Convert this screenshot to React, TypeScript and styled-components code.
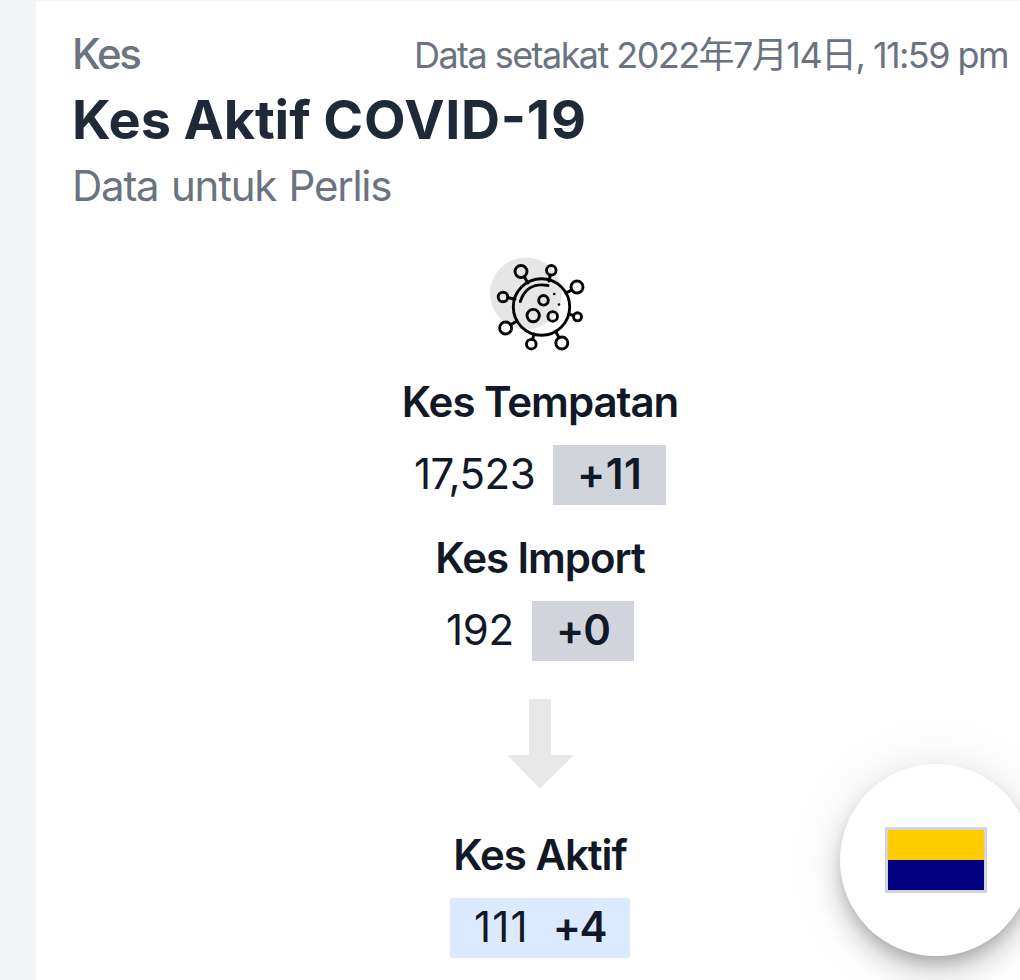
import React from "react";
import styled, { createGlobalStyle } from "styled-components";

const GlobalStyle = createGlobalStyle`
  *, *::before, *::after { box-sizing: border-box; }
  body {
    margin: 0;
    background: #f3f4f6;
    overflow: hidden;
    font-family: Inter, "Noto Sans CJK JP", sans-serif;
    font-feature-settings: "calt" 0;
    color: #111827;
  }
  p, h1, h2 { margin: 0; font-weight: 400; }
`;

const Page = styled.main`
  width: 100vw;
  height: 100vh;
  overflow: hidden;
  background: #f3f4f6;
`;

const Card = styled.section`
  width: 1008px;
  height: 1100px;
  margin: 1px 0 0 36px;
  padding: 23px 36px 0;
  background: #fff;
  white-space: nowrap;
`;

const TopRow = styled.div`
  display: flex;
  justify-content: space-between;
  align-items: center;
  height: 60px;
  color: #6b7280;
`;

const Category = styled.p`
  font-size: 42px;
  line-height: 60px;
  font-weight: 500;
  letter-spacing: -0.055em;
`;

const Timestamp = styled.p`
  padding-top: 2px;
  font-size: 36px;
  line-height: 60px;
  letter-spacing: -1.56px;
`;

const Title = styled.h1`
  font-size: 54px;
  line-height: 72px;
  font-weight: 700;
  letter-spacing: -0.1px;
  font-feature-settings: "calt" 1;
  color: #1f2937;
`;

const Tracked = styled.span<{ $tracking: number }>`
  letter-spacing: ${(p) => p.$tracking}px;
`;

const Subtitle = styled.p`
  font-size: 42px;
  line-height: 60px;
  letter-spacing: -1.25px;
  word-spacing: 2px;
  color: #6b7280;
`;

const Flow = styled.div`
  display: flex;
  flex-direction: column;
  align-items: center;
  padding-top: 41px;
  font-size: 42px;
  line-height: 60px;
`;

const VirusIcon = styled.svg`
  display: block;
  width: 96px;
  height: 96px;
  margin-bottom: 19px;
`;

const ArrowIcon = styled.svg`
  display: block;
  width: 96px;
  height: 96px;
  margin: 13px 0 32px;
`;

const Stat = styled.div`
  display: flex;
  flex-direction: column;
  align-items: center;
  gap: 13px;
  margin-bottom: 23px;
`;

const StatLabel = styled.h2`
  font-size: 42px;
  line-height: 60px;
  font-weight: 600;
  letter-spacing: -0.025em;
`;

const Figures = styled.div<{ $highlight?: boolean }>`
  display: flex;
  gap: ${(p) => (p.$highlight ? 0 : 18)}px;
  height: 60px;
  line-height: 58px;
  padding-left: ${(p) => (p.$highlight ? 24 : 0)}px;
  border-radius: ${(p) => (p.$highlight ? 3 : 0)}px;
  background: ${(p) => (p.$highlight ? "#dbeafe" : "transparent")};
`;

const Change = styled.strong<{ $plain?: boolean; $tracking: number }>`
  padding: 0 24px;
  font-weight: 600;
  letter-spacing: ${(p) => p.$tracking}px;
  background: ${(p) => (p.$plain ? "transparent" : "#d1d5db")};
`;

const StateButton = styled.button`
  position: fixed;
  left: 840px;
  top: 764px;
  display: flex;
  align-items: center;
  justify-content: center;
  width: 192px;
  height: 192px;
  padding: 0;
  border: 0;
  border-radius: 50%;
  background: #fff;
  box-shadow: 0 9px 15px -3px rgba(0, 0, 0, 0.2), 0 18px 30px rgba(0, 0, 0, 0.14),
    0 3px 54px rgba(0, 0, 0, 0.12);
`;

const Flag = styled.span`
  display: block;
  width: 102px;
  height: 66px;
  border: 3px solid #d1d5db;
  background: linear-gradient(#ffcc00 0 50%, #000080 50%);
`;

const nodes = [
  [31, 16.5, 6, 38, 28],
  [61.3, 15.3, 4.8, 59, 26],
  [87, 32, 6, 76, 38],
  [13, 42, 4.8, 25, 44],
  [87.5, 61.8, 4, 79, 59],
  [15.6, 73, 6, 27, 66],
  [41.3, 89.2, 4.8, 44, 79],
  [71.8, 88, 6, 66, 77],
];

export default function App() {
  return (
    <>
      <GlobalStyle />
      <Page>
        <Card>
          <TopRow>
            <Category>Kes</Category>
            <Timestamp>Data setakat 2022年7月14日, 11:59 pm</Timestamp>
          </TopRow>
          <Title>
            Kes Aktif <Tracked $tracking={0.75}>COVID-19</Tracked>
          </Title>
          <Subtitle>Data untuk Perlis</Subtitle>
          <Flow>
            <VirusIcon viewBox="2 2 96 96" fill="none" stroke="#050505" strokeWidth="2.9" strokeLinecap="round" overflow="visible">
              <circle cx="36" cy="38.5" r="36" fill="#e6e6e6" stroke="none" />
              {nodes.map(([x, y, r, tx, ty]) => {
                const d = Math.hypot(tx - x, ty - y);
                return (
                  <g key={`${x}-${y}`}>
                    <circle cx={x} cy={y} r={r} />
                    <path d={`M${x + ((tx - x) * r) / d} ${y + ((ty - y) * r) / d}L${tx} ${ty}`} />
                  </g>
                );
              })}
              <circle cx="51.5" cy="52" r="28.2" />
              <path d="M30.3 46.5C34 35 43 27.5 58 30.5" />
              <circle cx="53.5" cy="45.3" r="4.8" />
              <circle cx="43.2" cy="60.6" r="6.2" />
              <circle cx="62.7" cy="61.4" r="4.8" />
              <circle cx="64.2" cy="39" r="1.3" fill="#050505" stroke="none" />
              <circle cx="69" cy="49.5" r="1.3" fill="#050505" stroke="none" />
            </VirusIcon>
            <Stat>
              <StatLabel>Kes Tempatan</StatLabel>
              <Figures>
                <Tracked $tracking={-0.5}>17,523</Tracked>
                <Change $tracking={0.4}>+11</Change>
              </Figures>
            </Stat>
            <Stat>
              <StatLabel>Kes Import</StatLabel>
              <Figures>
                <Tracked $tracking={-0.3}>192</Tracked>
                <Change $tracking={-1}>+0</Change>
              </Figures>
            </Stat>
            <ArrowIcon viewBox="0 0 96 96">
              <path d="M37 2H59V58H82L48 91.5L15 58H37Z" fill="#e8e8e8" />
            </ArrowIcon>
            <Stat>
              <StatLabel>Kes Aktif</StatLabel>
              <Figures $highlight>
                <Tracked $tracking={1.2}>111</Tracked>
                <Change $plain $tracking={-1.5}>+4</Change>
              </Figures>
            </Stat>
          </Flow>
        </Card>
        <StateButton aria-label="Perlis">
          <Flag />
        </StateButton>
      </Page>
    </>
  );
}
